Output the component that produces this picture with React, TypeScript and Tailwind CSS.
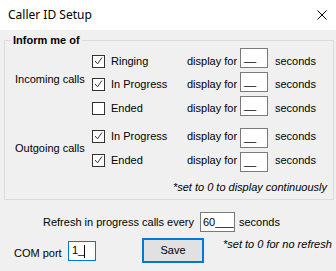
import React from 'react'

const body = "font-['Liberation_Sans',Arial,sans-serif] text-[11px] leading-[13px] text-black"

function Check({ on }: { on: boolean }) {
  return (
    <span className="flex h-[13px] w-[13px] shrink-0 items-center justify-center border border-[#333333] bg-white">
      {on && (
        <svg width="11" height="11" viewBox="0 0 11 11">
          <path d="M2 5 L4.5 7.8 L9 1.5" fill="none" stroke="#333333" strokeWidth="1" />
        </svg>
      )}
    </span>
  )
}

function Row({ label, on, off }: { label: string; on: boolean; off: string }) {
  return (
    <div className="flex h-[20px] items-start">
      <div className={`flex w-[95px] items-start gap-[6px] ${off}`}>
        <Check on={on} />
        <span>{label}</span>
      </div>
      <span className={`w-[53px] ${off}`}>display for</span>
      <div className="h-[20px] w-[28px] border border-[#7a7a7a] bg-white pl-[3px] pt-[2px]">__</div>
      <span className={`ml-[7px] ${off}`}>seconds</span>
    </div>
  )
}

export default function App() {
  return (
    <div className={`h-[271px] w-[336px] overflow-hidden bg-[#f0f0f0] ${body}`}>
      {/* title bar */}
      <div className="flex h-[30px] items-center justify-between bg-white pl-[8px] pr-[8px]">
        <span className="font-['Noto_Sans',sans-serif] text-[12px] leading-[16px]">Caller ID Setup</span>
        <svg width="10" height="10" viewBox="0 0 10 10" className="mr-[1px]">
          <path d="M0.5 0.5 L9.5 9.5 M9.5 0.5 L0.5 9.5" stroke="#000" strokeWidth="1" />
        </svg>
      </div>

      {/* group box */}
      <fieldset className="ml-[4px] mt-[4px] w-[330px] border border-[#dcdcdc] pb-[5px]">
        <legend className="ml-[6px] px-[2px] font-bold">Inform me of</legend>

        <div className="mt-[1px] flex">
          <div className="w-[87px] pl-[10px]">
            <div className="mt-[25px]">Incoming calls</div>
          </div>
          <div className="flex flex-col gap-[4px]">
            <Row label="Ringing" on off="mt-[7px]" />
            <Row label="In Progress" on off="mt-[6px]" />
            <Row label="Ended" on={false} off="mt-[6px]" />
          </div>
        </div>

        <div className="mt-[12px] flex">
          <div className="w-[87px] pl-[10px]">
            <div className="mt-[14px]">Outgoing calls</div>
          </div>
          <div className="flex flex-col gap-[4px]">
            <Row label="In Progress" on off="mt-[2px]" />
            <Row label="Ended" on off="mt-[2px]" />
          </div>
        </div>

        <div className="mt-[9px] pr-[6px] text-right italic">*set to 0 to display continuously</div>
      </fieldset>

      {/* refresh */}
      <div className="mt-[12px] flex h-[20px] items-center pl-[43px]">
        <span className="w-[157px]">Refresh in progress calls every</span>
        <div className="h-[20px] w-[35px] border border-[#7a7a7a] bg-white pl-[2px] pt-[3px]">60___</div>
        <span className="ml-[4px]">seconds</span>
      </div>

      {/* com port + save */}
      <div className="mt-[6px] flex items-start pl-[14px]">
        <span className="mt-[9px] w-[54px]">COM port</span>
        <div className="mt-[3px] flex h-[20px] w-[28px] items-start border border-[#0078d7] bg-white pl-[3px] pt-[2px]">
          <span>1_</span>
          <span className="mt-[1px] h-[13px] w-px bg-black" />
        </div>
        <button className="ml-[46px] h-[25px] w-[62px] border-2 border-[#0078d7] bg-[#e1e1e1] text-[11px]">Save</button>
        <span className="ml-[19px] italic">*set to 0 for no refresh</span>
      </div>
    </div>
  )
}
